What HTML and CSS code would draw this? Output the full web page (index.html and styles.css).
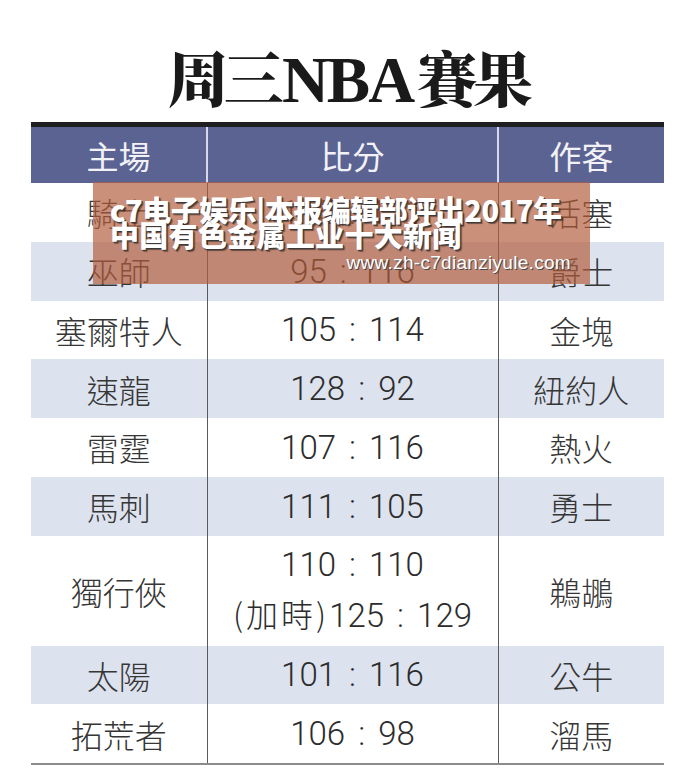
FILE: index.html
```html
<!DOCTYPE html>
<html lang="zh-Hant">
<head>
<meta charset="utf-8">
<title>周三NBA賽果</title>
<link rel="stylesheet" href="styles.css">
</head>
<body>
<div class="page">
  <h1 class="title"><span class="t-cjk">周三</span><span class="t-lat">NBA</span><span class="t-cjk">賽果</span></h1>
  <div class="board">
    <table class="results">
      <colgroup><col class="c1"><col class="c2"><col class="c3"></colgroup>
      <thead>
        <tr><th>主場</th><th>比分</th><th>作客</th></tr>
      </thead>
      <tbody>
        <tr><td>騎士</td><td class="score">115 : 111</td><td>活塞</td></tr>
        <tr class="alt"><td>巫師</td><td class="score">95 : 116</td><td>爵士</td></tr>
        <tr><td>塞爾特人</td><td class="score">105 : 114</td><td>金塊</td></tr>
        <tr class="alt"><td>速龍</td><td class="score">128 : 92</td><td>紐約人</td></tr>
        <tr><td>雷霆</td><td class="score">107 : 116</td><td>熱火</td></tr>
        <tr class="alt"><td>馬刺</td><td class="score">111 : 105</td><td>勇士</td></tr>
        <tr class="tall"><td>獨行俠</td><td class="score"><span class="line">110 : 110</span><span class="line"><span class="ot">(加時)</span>125 : 129</span></td><td>鵜鶘</td></tr>
        <tr class="alt"><td>太陽</td><td class="score">101 : 116</td><td>公牛</td></tr>
        <tr><td>拓荒者</td><td class="score">106 : 98</td><td>溜馬</td></tr>
      </tbody>
    </table>
    <div class="banner">
      <p class="headline"><span class="hl">c7电子娱乐|本报编辑部评出2017年</span><span class="hl">中国有色金属工业十大新闻</span></p>
      <p class="url">www.zh-c7dianziyule.com</p>
    </div>
  </div>
</div>
</body>
</html>
```

FILE: styles.css
```css
html, body {
  margin: 0;
  padding: 0;
  background: #ffffff;
}

.page {
  width: 681px;
  height: 784px;
  overflow: hidden;
}

.title {
  margin: 0;
  height: 122px;
  box-sizing: border-box;
  padding-top: 46px;
  padding-left: 16px;
  display: flex;
  justify-content: center;
  align-items: baseline;
  line-height: 1;
  color: #1a1a1a;
  font-weight: 700;
  white-space: nowrap;
}

.t-cjk {
  font-family: "Noto Serif CJK TC", "Noto Serif CJK SC", "Noto Sans CJK TC", serif;
  font-size: 60px;
  font-weight: 900;
  letter-spacing: -4px;
}

.t-lat {
  font-family: "Liberation Serif", serif;
  font-size: 65px;
  font-weight: 700;
  letter-spacing: -2px;
  margin: 0 4px 0 2px;
}

.board {
  position: relative;
  margin-left: 31px;
  width: 633px;
}

.results {
  width: 633px;
  border-collapse: collapse;
  table-layout: fixed;
  border-top: 5px solid #1f1f22;
  border-bottom: 2px solid #8c8c8c;
}

.c1 { width: 176px; }
.c2 { width: 291px; }
.c3 { width: 166px; }

.results th {
  height: 56px;
  padding: 0;
  background: #5b6393;
  color: #f2f2f6;
  font-family: "Noto Sans CJK TC", sans-serif;
  font-weight: 400;
  font-size: 32px;
  text-align: center;
  vertical-align: middle;
}

.results th + th {
  border-left: 2px solid #d6d9ec;
}

.results td {
  height: 58.75px;
  padding: 0;
  color: #363636;
  font-family: "Noto Sans CJK TC", sans-serif;
  font-weight: 300;
  font-size: 32px;
  text-align: center;
  vertical-align: middle;
  line-height: 1;
}

.results td + td {
  border-left: 1px solid #5a5a5a;
}

.results tr.alt td {
  background: #dce2ee;
}

.results tr.tall td {
  height: 110px;
}

.results td.score {
  font-family: Roboto, "Noto Sans CJK TC", sans-serif;
  font-weight: 300;
  font-size: 33px;
  word-spacing: 5px;
  color: #2c2c2c;
}

.score .line {
  display: block;
  line-height: 48px;
}

.score .ot {
  font-family: "Noto Sans CJK TC", sans-serif;
  font-weight: 300;
  font-size: 32px;
  letter-spacing: 3px;
}

.banner {
  position: absolute;
  left: 62px;
  top: 60px;
  width: 497px;
  height: 102px;
  box-sizing: border-box;
  padding: 15px 19px 0 17px;
  background: rgba(178, 92, 58, 0.68);
  color: #ffffff;
}

.headline {
  margin: 0;
  font-family: "Noto Sans CJK SC", sans-serif;
  font-weight: 900;
  font-size: 29px;
  letter-spacing: -0.5px;
  text-shadow: 1px 1px 0 #3a3a3a, 2px 2px 1px rgba(0, 0, 0, 0.45);
  white-space: nowrap;
}

.hl {
  display: block;
  height: 25px;
  line-height: 25px;
}

.hl + .hl {
  letter-spacing: 0.3px;
}

.url {
  margin: 6px 0 0 0;
  text-align: right;
  font-family: "Liberation Sans", sans-serif;
  font-size: 19px;
  line-height: 20px;
  letter-spacing: 0.3px;
  text-shadow: 1px 1px 0 #4a4a4a;
}
```
